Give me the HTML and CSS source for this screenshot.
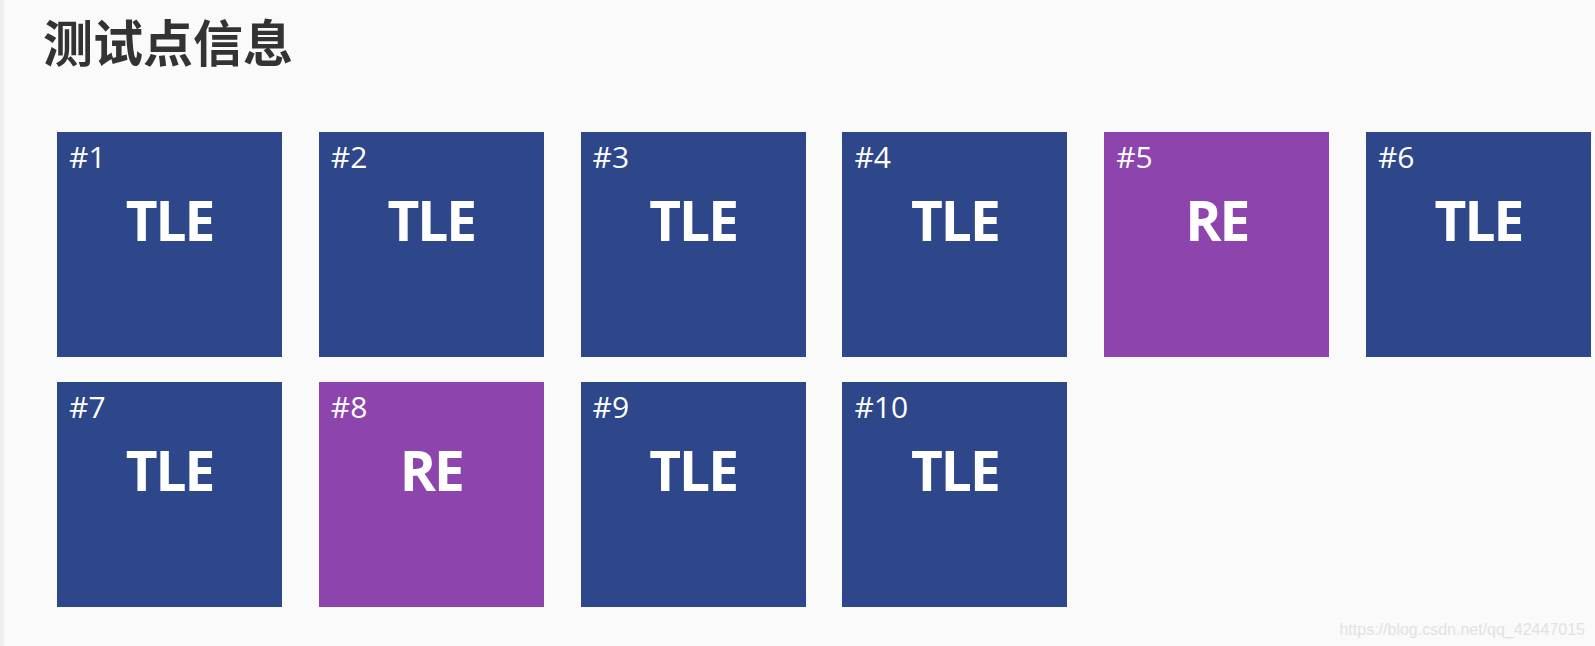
FILE: index.html
```html
<!DOCTYPE html>
<html lang="zh-CN">
<head>
    <meta charset="UTF-8">
    <meta name="viewport" content="width=device-width, initial-scale=1.0">
    <title>测试点信息</title>
    <link rel="stylesheet" href="styles.css">
</head>
<body>
    <div class="page">
        <h1 class="page-title">测试点信息</h1>
        <div class="cases">
            <div class="case tle"><span class="case-no">#1</span><div class="case-result">TLE</div></div>
            <div class="case tle"><span class="case-no">#2</span><div class="case-result">TLE</div></div>
            <div class="case tle"><span class="case-no">#3</span><div class="case-result">TLE</div></div>
            <div class="case tle"><span class="case-no">#4</span><div class="case-result">TLE</div></div>
            <div class="case re"><span class="case-no">#5</span><div class="case-result">RE</div></div>
            <div class="case tle"><span class="case-no">#6</span><div class="case-result">TLE</div></div>
            <div class="case tle"><span class="case-no">#7</span><div class="case-result">TLE</div></div>
            <div class="case re"><span class="case-no">#8</span><div class="case-result">RE</div></div>
            <div class="case tle"><span class="case-no">#9</span><div class="case-result">TLE</div></div>
            <div class="case tle"><span class="case-no">#10</span><div class="case-result">TLE</div></div>
        </div>
    </div>
    <div class="watermark">https://blog.csdn.net/qq_42447015</div>
</body>
</html>
```

FILE: styles.css
```css
html, body {
    height: 100%;
}

body {
    margin: 0;
    background-color: #fafafa;
    border-left: 4px solid #efefef;
    box-sizing: border-box;
    font-family: 'Open Sans', 'Noto Sans', sans-serif;
    overflow: hidden;
}

.page {
    padding: 4px 0 0 39px;
}

.page-title {
    margin: 0;
    font-family: 'Noto Sans CJK SC', 'Noto Sans', sans-serif;
    font-size: 50px;
    font-weight: 700;
    color: #333;
}

/* test case tiles */
.cases {
    display: grid;
    grid-template-columns: repeat(6, 225px);
    column-gap: 36.8px;
    row-gap: 25px;
    margin: 56px 0 0 14px;
}

.case {
    height: 225px;
    padding: 4px 12px;
    box-sizing: border-box;
    color: #fff;
}

.case.tle {
    background-color: #2e478b;
}

.case.re {
    background-color: #8e44ad;
}

.case-no {
    display: block;
    font-size: 30px;
    line-height: 41px;
}

.case-result {
    margin-top: 5px;
    text-align: center;
    font-size: 55px;
    font-weight: 700;
    letter-spacing: -2px;
}

.watermark {
    position: absolute;
    right: 10px;
    bottom: 7px;
    font-family: 'Liberation Sans', Arial, sans-serif;
    font-size: 16px;
    color: #e2e2e2;
}
```
